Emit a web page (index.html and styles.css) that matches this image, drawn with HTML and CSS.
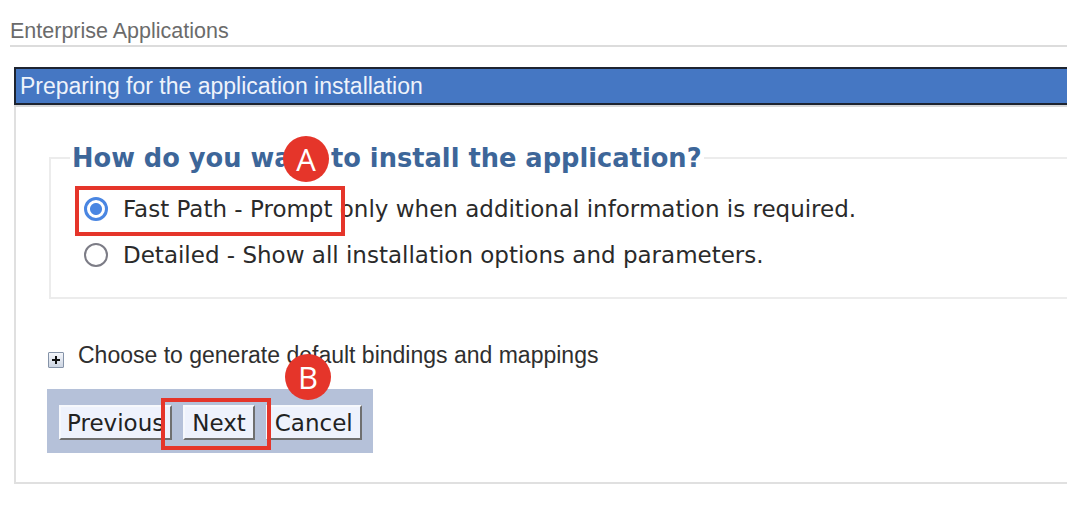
FILE: index.html
```html
<!DOCTYPE html>
<html>
<head>
<meta charset="utf-8">
<link rel="stylesheet" href="styles.css">
</head>
<body>
<div class="page">
  <div class="title">Enterprise Applications</div>
  <div class="panel">
    <div class="panel-head">Preparing for the application installation</div>
    <div class="panel-body">
      <fieldset class="choice">
        <legend>How do you want to install the application?</legend>
        <label class="opt"><span class="radio on"></span><span>Fast Path - Prompt only when additional information is required.</span></label>
        <label class="opt"><span class="radio"></span><span>Detailed - Show all installation options and parameters.</span></label>
      </fieldset>
      <div class="expand"><span class="plus"></span><span>Choose to generate default bindings and mappings</span></div>
      <div class="btnbar">
        <button class="btn">Previous</button>
        <button class="btn">Next</button>
        <button class="btn">Cancel</button>
      </div>
    </div>
  </div>
  <div class="mark box-a"></div>
  <div class="badge badge-a">A</div>
  <div class="mark box-b"></div>
  <div class="badge badge-b">B</div>
</div>
</body>
</html>
```
FILE: styles.css
```css
html, body { margin: 0; padding: 0; background: #fff; }
.page {
  position: relative;
  width: 1057px;
  padding: 17px 0 0 10px;
  font-family: "Liberation Sans", Arial, sans-serif;
}
.title {
  font-size: 21.5px;
  color: #6b6b6b;
  line-height: 28px;
  border-bottom: 2px solid #dcdcdc;
}
.panel {
  margin: 20px 0 0 4px;
  border-left: 2px solid #e0e0e0;
  border-bottom: 2px solid #e0e0e0;
  height: 415px;
}
.panel-head {
  margin-left: -2px;
  height: 34px;
  line-height: 34px;
  background: #4577c3;
  border: 2px solid #1e2430;
  border-right: none;
  color: #eef3fb;
  font-size: 23px;
  padding-left: 4px;
  box-shadow: 0 2px 0 #d8d8d8;
}
.panel-body { padding: 38px 0 0 33px; }
.choice {
  margin: 0;
  border: 2px solid #ececec;
  border-right: none;
  padding: 13px 0 19px 33px;
  font-family: "DejaVu Sans", sans-serif;
}
.choice legend {
  padding: 0 2px;
  margin-left: -14px;
  font-size: 25.7px;
  line-height: 30px;
  font-weight: bold;
  color: #3d6699;
}
.opt {
  display: flex;
  align-items: center;
  gap: 15px;
  height: 46px;
  font-size: 23px;
  color: #2a2a2a;
}
.radio {
  width: 20px; height: 20px;
  border: 2px solid #7c7c86;
  border-radius: 50%;
  box-sizing: content-box;
  flex: none;
}
.radio.on {
  border: 3px solid #4a86e2;
  width: 18px; height: 18px;
  background: radial-gradient(circle, #4a86e2 0 5.5px, #fff 6.5px);
}
.expand {
  display: flex;
  align-items: center;
  gap: 14px;
  height: 26px;
  margin-top: 43px;
  margin-left: -1px;
  font-size: 23px;
  color: #2f2f2f;
}
.plus {
  position: relative;
  width: 14px; height: 14px;
  margin-top: 9px;
  border: 1px solid #8593a8;
  border-radius: 1px;
  background: linear-gradient(#f4f6fa, #cdd5e2);
  flex: none;
}
.plus::before, .plus::after {
  content: "";
  position: absolute;
  background: #111;
}
.plus::before { left: 3px; top: 6px; width: 8px; height: 2px; }
.plus::after { left: 6px; top: 3px; width: 2px; height: 8px; }
.btnbar {
  display: flex;
  gap: 11px;
  margin: 21px 0 0 -2px;
  width: 326px;
  height: 64px;
  box-sizing: border-box;
  padding: 16px 0 0 12px;
  background: #b5c1d9;
}
.btn {
  height: 35px;
  padding: 0 7px;
  font-family: "DejaVu Sans", sans-serif;
  font-size: 23px;
  color: #222;
  background: #eef2fc;
  border: 2px solid;
  border-color: #f6f8fc #6f6f6f #6f6f6f #f6f8fc;
}
.btn:first-child { padding: 0 6px; }
.mark {
  position: absolute;
  border: 4px solid #e5352a;
}
.box-a { left: 75px; top: 186px; width: 262px; height: 42px; }
.box-b { left: 161px; top: 398px; width: 102px; height: 44px; }
.badge {
  position: absolute;
  width: 46px; height: 46px;
  border-radius: 50%;
  background: #e5352a;
  color: #fff;
  font-family: "Open Sans", sans-serif;
  font-size: 31px;
  line-height: 46px;
  text-align: center;
}
.badge-a { left: 283px; top: 136px; }
.badge-b { left: 285px; top: 354px; }
```
